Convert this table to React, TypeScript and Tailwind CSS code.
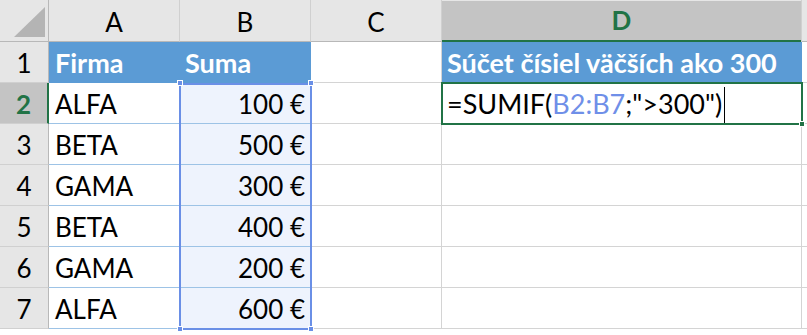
import React from 'react';

const rows = [
  { n: 2, firma: 'ALFA', suma: '100 €' },
  { n: 3, firma: 'BETA', suma: '500 €' },
  { n: 4, firma: 'GAMA', suma: '300 €' },
  { n: 5, firma: 'BETA', suma: '400 €' },
  { n: 6, firma: 'GAMA', suma: '200 €' },
  { n: 7, firma: 'ALFA', suma: '600 €' },
];

const font = { fontFamily: 'Lato, "Open Sans", sans-serif' };

function ColHead({ label }: { label: string }) {
  return (
    <div className="flex h-[42px] items-center justify-center border-r border-b border-r-[#d0d0d0] border-b-[#b8b8b8] bg-[#e6e6e6] pt-[4px] text-[26px] text-black">
      {label}
    </div>
  );
}

export default function App() {
  return (
    <div className="relative h-[335px] w-[807px] overflow-hidden bg-white" style={font}>
      <div className="grid grid-cols-[49px_131px_131px_131px_360px_1fr] grid-rows-[42px_repeat(7,41px)_1fr]">
        {/* corner */}
        <div className="relative h-[42px] border-r border-b border-[#b8b8b8] bg-[#e6e6e6]">
          <div
            className="absolute right-[3px] bottom-[4px] h-[30px] w-[31px] bg-[#b4b4b4]"
            style={{ clipPath: 'polygon(100% 0, 100% 100%, 0 100%)' }}
          />
        </div>
        <ColHead label="A" />
        <ColHead label="B" />
        <ColHead label="C" />
        <div className="flex h-[42px] flex-col border-r border-r-[#d0d0d0] bg-[#e6e6e6]">
          <div className="h-[4px]" />
          <div className="flex flex-1 items-center justify-center border-b-2 border-[#217346] bg-[#c4c4c4] text-[26px] font-bold text-[#217346]">
            D
          </div>
        </div>
        <div className="h-[42px] border-b border-[#b8b8b8] bg-[#e6e6e6]" />

        {/* row 1 */}
        <div className="flex items-center justify-center border-r border-b border-r-[#b8b8b8] border-b-[#d0d0d0] bg-[#e6e6e6] pt-[2px] text-[26px]">1</div>
        <div className="flex items-center bg-[#5b9bd5] pl-[6px] pt-[2px] text-[27px] font-bold text-white">Firma</div>
        <div className="flex items-center bg-[#5b9bd5] pl-[5px] pt-[2px] text-[27px] font-bold text-white">Suma</div>
        <div className="border-r border-b border-[#d4d4d4]" />
        <div className="flex items-center bg-[#5b9bd5] pl-[5px] pt-[2px] text-[27px] font-bold whitespace-nowrap text-white">
          Súčet čísiel väčších ako 300
        </div>
        <div className="border-b border-[#d4d4d4]" />

        {rows.map((r) => (
          <React.Fragment key={r.n}>
            <div
              className={
                r.n === 2
                  ? 'flex items-center justify-center border-r-2 border-b border-r-[#217346] border-b-[#d0d0d0] bg-[#c4c4c4] pt-[2px] text-[26px] font-bold text-[#217346]'
                  : 'flex items-center justify-center border-r border-b border-r-[#b8b8b8] border-b-[#d0d0d0] bg-[#e6e6e6] pt-[2px] text-[26px] text-black'
              }
            >
              {r.n}
            </div>
            <div className="flex items-center border-b border-[#9dc3e6] pl-[6px] pt-[2px] text-[26px] text-black">{r.firma}</div>
            <div className="flex items-center justify-end border-b border-[#9dc3e6] bg-[#eef3fd] pr-[6px] pt-[2px] text-[26px] text-black">
              {r.suma}
            </div>
            <div className="border-r border-b border-[#d4d4d4]" />
            {r.n === 2 ? (
              <div className="flex items-center pl-[5px] pt-[2px] text-[27px] whitespace-nowrap text-black">
                <span>=SUMIF(</span>
                <span className="text-[#6f8fe8]">B2:B7</span>
                <span>;"&gt;300")</span>
                <span className="ml-[2px] h-[36px] w-px bg-black" />
              </div>
            ) : (
              <div className="border-r border-b border-[#d4d4d4]" />
            )}
            <div className="border-b border-[#d4d4d4]" />
          </React.Fragment>
        ))}

        {/* partial row 8 */}
        <div className="border-r border-[#b8b8b8] bg-[#e6e6e6]" />
        <div className="border-r border-[#d4d4d4]" />
        <div className="border-r border-[#d4d4d4]" />
        <div className="border-r border-[#d4d4d4]" />
        <div className="border-r border-[#d4d4d4]" />
        <div />
      </div>

      {/* selection B2:B7 */}
      <div className="pointer-events-none absolute top-[83px] left-[179px] h-[247px] w-[133px] border-2 border-[#6a8fe6]" />
      <div className="absolute top-[80px] left-[177px] h-[6px] w-[6px] border border-white bg-[#6a8fe6]" />
      <div className="absolute top-[80px] left-[308px] h-[6px] w-[6px] border border-white bg-[#6a8fe6]" />
      <div className="absolute top-[326px] left-[177px] h-[6px] w-[6px] border border-white bg-[#6a8fe6]" />
      <div className="absolute top-[326px] left-[308px] h-[6px] w-[6px] border border-white bg-[#6a8fe6]" />

      {/* active cell D2 */}
      <div className="pointer-events-none absolute top-[82px] left-[441px] h-[43px] w-[362px] border-2 border-[#217346]" />
      <div className="absolute top-[121px] left-[799px] h-[6px] w-[6px] border border-white bg-[#217346]" />
    </div>
  );
}
